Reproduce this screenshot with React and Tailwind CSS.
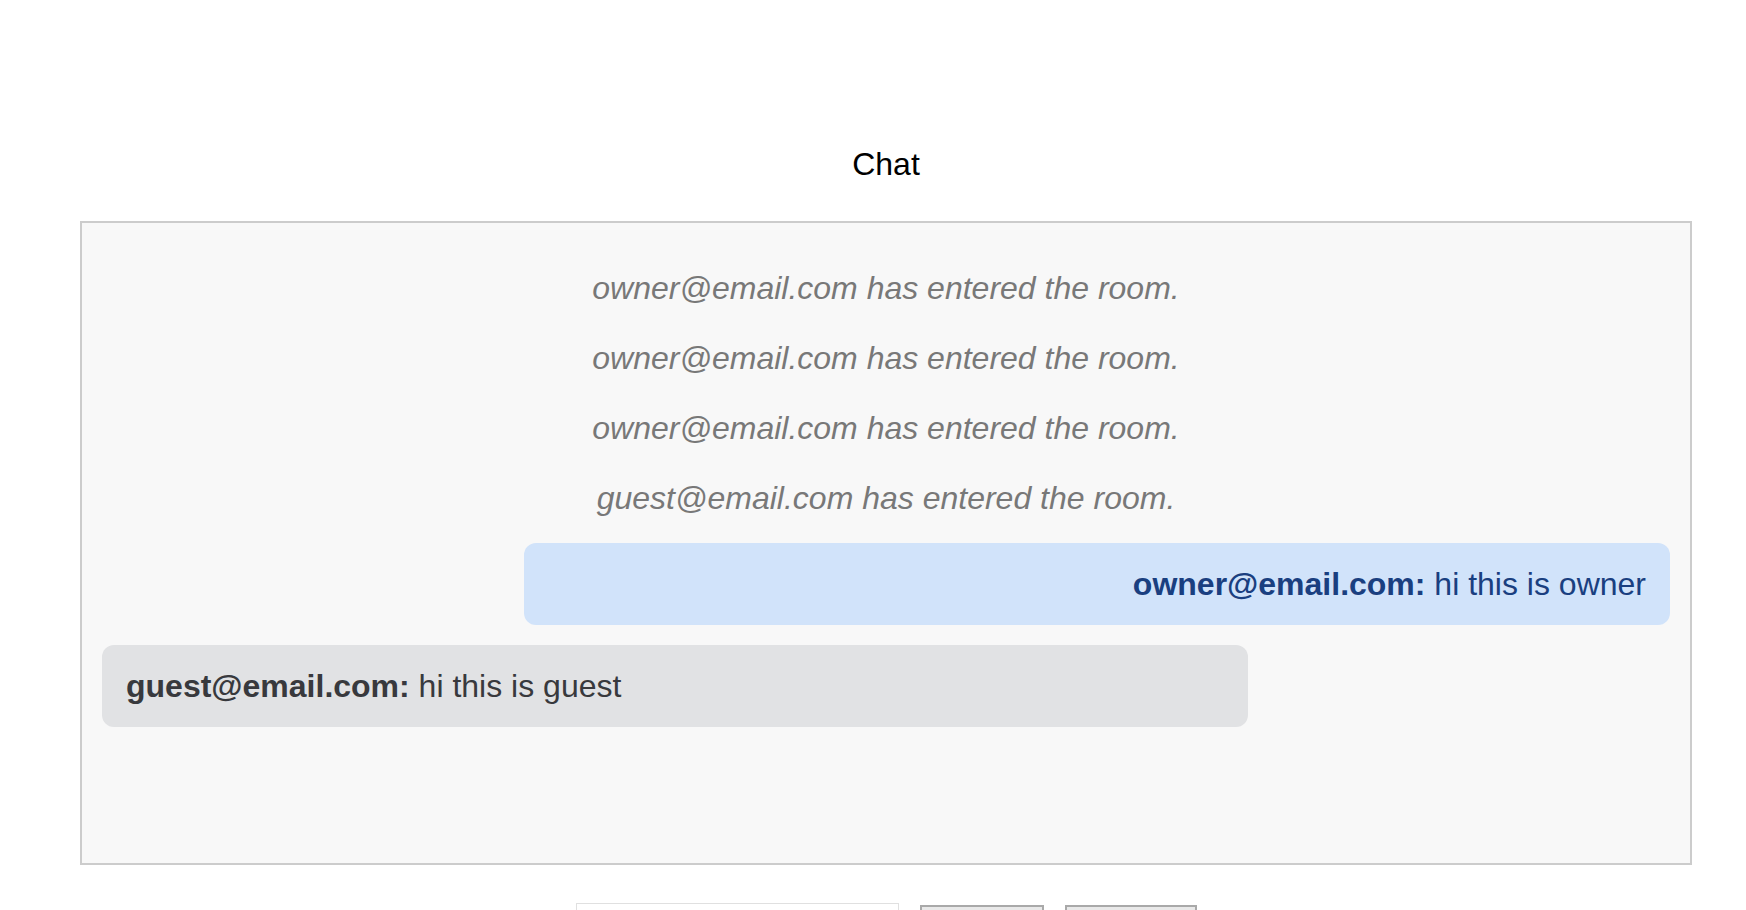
const systemMessages = [
  'owner@email.com has entered the room.',
  'owner@email.com has entered the room.',
  'owner@email.com has entered the room.',
  'guest@email.com has entered the room.',
]

const Bubble = ({ user, text, mine }) => (
  <div
    className={`box-border w-[1146px] rounded-[12px] px-6 py-[22px] text-[32px] leading-[38px] ${
      mine ? 'self-end bg-[#d1e3fa] text-right text-[#1a3f80]' : 'self-start bg-[#e1e2e4] text-[#38393d]'
    }`}
  >
    <span className="font-bold">{user}:</span> {text}
  </div>
)

export default function App() {
  return (
    <div className="min-h-[910px] bg-white pl-[80px] pr-[54px] pt-[146px] font-['Liberation_Sans',Arial,sans-serif] text-black">
      <h2 className="mb-[38px] text-center text-[32px] leading-[37px] font-normal">Chat</h2>

      {/* messages */}
      <div className="box-border flex h-[644px] flex-col border-2 border-[#cccccc] bg-[#f8f8f8] px-5 pt-[30px]">
        {systemMessages.map((msg, i) => (
          <p key={i} className="py-4 text-center text-[32px] leading-[38px] italic text-[#787878]">
            {msg}
          </p>
        ))}
        <div className="mt-[10px] flex flex-col gap-5">
          <Bubble user="owner@email.com" text="hi this is owner" mine />
          <Bubble user="guest@email.com" text="hi this is guest" />
        </div>
      </div>

      {/* input row */}
      <div className="mt-[38px] flex items-start justify-center gap-[21px]">
        <input
          type="text"
          className="box-border h-[60px] w-[323px] border border-[#e0e0e0] bg-white px-3 text-[28px] outline-none"
        />
        <button className="mt-[2px] box-border h-[64px] w-[124px] border-2 border-[#a9a9a9] bg-[#e9e9e9] pt-3 text-[28px] text-black">
          Send
        </button>
        <button className="mt-[2px] box-border h-[64px] w-[132px] border-2 border-[#a9a9a9] bg-[#e9e9e9] pt-3 text-[28px] text-black">
          Leave
        </button>
      </div>
    </div>
  )
}
